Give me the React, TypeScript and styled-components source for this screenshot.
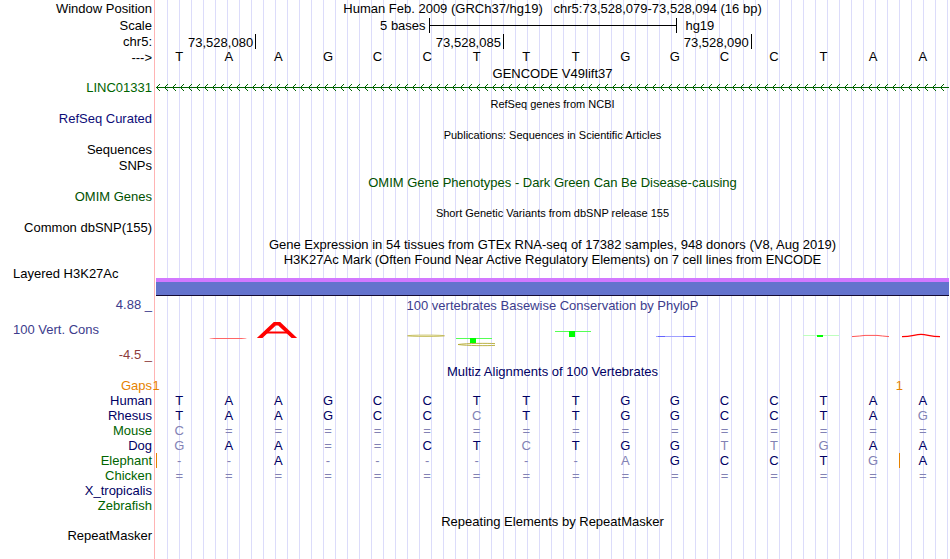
import React from "react";
import styled, { createGlobalStyle } from "styled-components";

const GlobalStyle = createGlobalStyle`
  body { margin: 0; background: #fff; }
`;

const INK = "#000";
const NAVY = "#000064";
const GREEN = "#006400";
const ORANGE = "#e68200";
const SLATE = "#8282b4";
const WIGGLE = "#3c3c8c";

const Page = styled.main`
  box-sizing: border-box;
  min-height: 100vh;
  padding-right: 1px;
  font: 13px/15px "Liberation Sans", Arial, sans-serif;
  color: ${INK};
  background:
    linear-gradient(#ffb4b4, #ffb4b4) 154px 0 / 1px 100% no-repeat,
    repeating-linear-gradient(to right, transparent 0 11px, #dcdcfa 11px 12px) 156px 0 no-repeat;
`;

const Row = styled.section<{ $h?: number; $align?: string; $top?: number }>`
  box-sizing: border-box;
  display: grid;
  grid-template-columns: 152px minmax(0, 1fr);
  column-gap: 4px;
  height: ${(p) => p.$h ?? 15}px;
  padding-top: ${(p) => p.$top ?? 0}px;
  align-items: ${(p) => p.$align ?? "center"};
  white-space: nowrap;
`;

const Label = styled.div<{ $color?: string; $left?: boolean }>`
  text-align: ${(p) => (p.$left ? "left" : "right")};
  padding-left: ${(p) => (p.$left ? 13 : 0)}px;
  color: ${(p) => p.$color ?? INK};
`;
const TrackLabel = styled(Label)`
  padding-bottom: 2px;
  line-height: 13px;
`;

const Title = styled.h2<{ $color?: string; $small?: boolean }>`
  grid-column: 2;
  margin: 0;
  text-align: center;
  font-weight: 400;
  font-size: ${(p) => (p.$small ? 11 : 13)}px;
  line-height: 15px;
  white-space: pre;
  color: ${(p) => p.$color ?? INK};
`;

const ScaleBar = styled.div`
  display: grid;
  grid-template-columns: 11fr 10fr 11fr;
  align-items: center;
`;
const ScaleText = styled.span<{ $end?: boolean }>`
  text-align: ${(p) => (p.$end ? "right" : "left")};
  padding: 0 3px 0 9px;
`;
const ScaleLine = styled.div`
  height: 15px;
  margin-right: -1px;
  border: solid ${INK};
  border-width: 0 1px;
  background: linear-gradient(${INK}, ${INK}) 0 7px / 100% 1px no-repeat;
`;

const Columns = styled.div`
  display: grid;
  grid-template-columns: repeat(16, minmax(0, 1fr));
`;
const Tick = styled.span<{ $span: number }>`
  grid-column: span ${(p) => p.$span};
  height: 15px;
  margin-right: -1px;
  padding-right: 2px;
  border-right: 1px solid ${INK};
  text-align: right;
  line-height: 17px;
`;
const Base = styled.span`
  padding-right: 3px;
  text-align: center;
  line-height: 13px;
`;

const Transcript = styled.svg`
  display: block;
  width: 100%;
  height: 15px;
`;

const Histone = styled.div`
  align-self: end;
  height: 13px;
  border-top: 4px solid #d278ff;
  border-bottom: 1px solid #140a32;
  background: #6473cd;
`;

const AxisLabels = styled.div`
  display: flex;
  flex-direction: column;
  gap: 10px;
`;

const Glyph = styled.svg`
  display: block;
  justify-self: center;
  margin-right: 3px;
`;

const Alignment = styled.table`
  width: 100%;
  table-layout: fixed;
  border-collapse: collapse;
  font: inherit;
`;
const Species = styled.th<{ $color: string }>`
  width: 152px;
  height: 15px;
  padding: 0 4px 0 0;
  text-align: right;
  font-weight: 400;
  color: ${(p) => p.$color};
`;
const Cell = styled.td<{ $dim: boolean; $insert: boolean }>`
  padding: 0 3px 0 0;
  text-align: center;
  color: ${(p) => (p.$dim ? SLATE : NAVY)};
  box-shadow: ${(p) => (p.$insert ? `inset 1px 0 ${ORANGE}` : "none")};
`;
const GapCount = styled.span`
  display: flex;
  justify-content: center;
  width: 0;
  color: ${ORANGE};
`;

const REFERENCE = "TAAGCCTTTGGCCTAA";

type Sequence = { name: string; color: string; bases: string; inserts?: number[] };
const SEQUENCES: Sequence[] = [
  { name: "Human", color: NAVY, bases: REFERENCE },
  { name: "Rhesus", color: NAVY, bases: "TAAGCCCTTGGCCTAG" },
  { name: "Mouse", color: GREEN, bases: "C===============" },
  { name: "Dog", color: NAVY, bases: "GAA==CTCTGGTTGAA" },
  { name: "Elephant", color: GREEN, bases: "--A------AGCCTGA", inserts: [0, 15] },
  { name: "Chicken", color: GREEN, bases: "================" },
  { name: "X_tropicalis", color: NAVY, bases: "" },
  { name: "Zebrafish", color: GREEN, bases: "" },
];

const SLOTS = Array.from({ length: 16 }, (_, i) => i);

const MARKS: Record<number, React.ReactNode> = {
  1: <ellipse cx="19" cy="25.5" rx="19" ry="0.6" fill="#f66" />,
  2: (
    <g fill="none" stroke="#f00">
      <clipPath id="peak">
        <rect x="-4" y="9" width="48" height="16" />
      </clipPath>
      <polyline
        points="-1,27.5 17,10.5 21,10.5 39,27.5"
        strokeWidth="3.8"
        clipPath="url(#peak)"
      />
      <line x1="9" y1="19.5" x2="29" y2="19.5" strokeWidth="2" />
    </g>
  ),
  5: <ellipse cx="19" cy="22.8" rx="18.5" ry="0.7" fill="#fffff0" stroke="#b4aa32" strokeWidth="0.7" />,
  6: (
    <g>
      <rect x="-1" y="25" width="36" height="1" fill="#5f5" />
      <rect x="13" y="25" width="6" height="5" fill="#0f0" />
      <path
        d="M38 30.6C30 30.2 10 30.2 1 31.5C10 32.8 30 32.8 38 32.4"
        fill="none"
        stroke="#b4aa32"
        strokeWidth="0.9"
      />
    </g>
  ),
  8: (
    <g>
      <rect x="-1" y="18" width="36" height="1" fill="#5f5" />
      <rect x="13" y="18" width="6" height="6" fill="#0f0" />
    </g>
  ),
  10: (
    <g>
      <rect x="1" y="23" width="40" height="1" fill="#a0a0ff" />
      <rect x="3" y="23" width="7" height="1" fill="#6464ff" />
      <rect x="28" y="23" width="12" height="1" fill="#6464ff" />
    </g>
  ),
  13: (
    <g>
      <rect x="-1" y="22" width="36" height="1" fill="#beffbe" />
      <rect x="13" y="22" width="6" height="2" fill="#0f0" />
    </g>
  ),
  14: <path d="M-1 23.6Q8 23 12 22.4H24Q29 23 36 23.6" fill="none" stroke="#f55" strokeWidth="1" />,
  15: <path d="M-1 23.6C9 23.4 12 21.4 18 21.4S27 23.4 37 23.6" fill="none" stroke="#f00" strokeWidth="1.3" />,
};

export default function App() {
  return (
    <>
      <GlobalStyle />
      <Page>
        <Row $h={16}>
          <Label>Window Position</Label>
          <Title>{"Human Feb. 2009 (GRCh37/hg19)   chr5:73,528,079-73,528,094 (16 bp)"}</Title>
        </Row>
        <Row $h={18}>
          <Label>Scale</Label>
          <ScaleBar>
            <ScaleText $end>5 bases</ScaleText>
            <ScaleLine />
            <ScaleText>hg19</ScaleText>
          </ScaleBar>
        </Row>
        <Row $h={16} $align="start">
          <Label>chr5:</Label>
          <Columns>
            <Tick $span={2}>73,528,080</Tick>
            <Tick $span={5}>73,528,085</Tick>
            <Tick $span={5}>73,528,090</Tick>
          </Columns>
        </Row>
        <Row $h={16} $align="start">
          <Label>---&gt;</Label>
          <Columns>
            {SLOTS.map((i) => (
              <Base key={i}>{REFERENCE[i]}</Base>
            ))}
          </Columns>
        </Row>

        <Row><Title>GENCODE V49lift37</Title></Row>
        <Row>
          <TrackLabel $color={GREEN}>LINC01331</TrackLabel>
          <Transcript aria-hidden="true">
            <defs>
              <pattern id="strand" width="8" height="15" patternUnits="userSpaceOnUse">
                <g fill={GREEN} shapeRendering="crispEdges">
                  <rect x="0" y="6" width="8" height="1" />
                  <rect x="1" y="5" width="1" height="3" />
                  <rect x="2" y="4" width="1" height="1" />
                  <rect x="2" y="8" width="1" height="1" />
                  <rect x="3" y="3" width="1" height="1" />
                  <rect x="3" y="9" width="1" height="1" />
                </g>
              </pattern>
            </defs>
            <rect width="100%" height="15" fill="url(#strand)" />
          </Transcript>
        </Row>
        <Row $h={16}><Title $small>RefSeq genes from NCBI</Title></Row>
        <Row><TrackLabel $color="#0c0c78">RefSeq Curated</TrackLabel></Row>
        <Row $h={16}><Title $small>Publications: Sequences in Scientific Articles</Title></Row>
        <Row><TrackLabel>Sequences</TrackLabel></Row>
        <Row $h={16}><TrackLabel>SNPs</TrackLabel></Row>
        <Row $h={16}>
          <Title $color="#005000">OMIM Gene Phenotypes - Dark Green Can Be Disease-causing</Title>
        </Row>
        <Row><TrackLabel $color="#005000">OMIM Genes</TrackLabel></Row>
        <Row $h={16}><Title $small>Short Genetic Variants from dbSNP release 155</Title></Row>
        <Row><TrackLabel>Common dbSNP(155)</TrackLabel></Row>
        <Row $h={16}>
          <Title>Gene Expression in 54 tissues from GTEx RNA-seq of 17382 samples, 948 donors (V8, Aug 2019)</Title>
        </Row>
        <Row>
          <Title>H3K27Ac Mark (Often Found Near Active Regulatory Elements) on 7 cell lines from ENCODE</Title>
        </Row>
        <Row $h={29} $align="start">
          <TrackLabel $left>Layered H3K27Ac</TrackLabel>
          <Histone />
        </Row>

        <Row $h={68} $top={2} $align="start">
          <AxisLabels>
            <TrackLabel $color={WIGGLE}>4.88 _</TrackLabel>
            <TrackLabel $left $color={WIGGLE}>100 Vert. Cons</TrackLabel>
            <TrackLabel $color="#8c3c3c">-4.5 _</TrackLabel>
          </AxisLabels>
          <div>
            <Title $color={WIGGLE}>100 vertebrates Basewise Conservation by PhyloP</Title>
            <Columns>
              {SLOTS.map((i) => (
                <Glyph key={i} width="40" height="50" overflow="visible" aria-hidden="true">
                  {MARKS[i]}
                </Glyph>
              ))}
            </Columns>
          </div>
        </Row>

        <Row $h={14}><Title $color={NAVY}>Multiz Alignments of 100 Vertebrates</Title></Row>
        <Alignment>
          <tbody>
            <tr>
              <Species scope="row" $color={ORANGE}>Gaps</Species>
              {SLOTS.map((i) => (
                <Cell key={i} $dim={false} $insert={false}>
                  {(i === 0 || i === 15) && <GapCount>1</GapCount>}
                </Cell>
              ))}
            </tr>
            {SEQUENCES.map((s) => (
              <tr key={s.name}>
                <Species scope="row" $color={s.color}>{s.name}</Species>
                {SLOTS.map((i) => (
                  <Cell key={i} $dim={s.bases[i] !== REFERENCE[i]} $insert={!!s.inserts?.includes(i)}>
                    {s.bases[i]}
                  </Cell>
                ))}
              </tr>
            ))}
          </tbody>
        </Alignment>
        <Row $h={16}><Title>Repeating Elements by RepeatMasker</Title></Row>
        <Row><TrackLabel>RepeatMasker</TrackLabel></Row>
      </Page>
    </>
  );
}
